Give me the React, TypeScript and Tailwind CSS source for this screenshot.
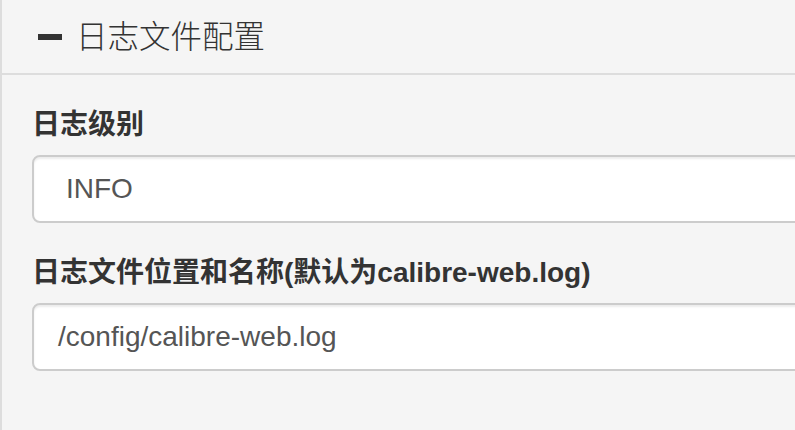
export default function App() {
  return (
    <div
      className="w-[795px] h-[430px] overflow-hidden bg-[#f5f5f5] text-[#333]"
      style={{ fontFamily: '"Liberation Sans", Arial, "Noto Sans CJK SC", sans-serif' }}
    >
      <div className="w-[1400px] h-full border-l-2 border-[#ddd] bg-[#f5f5f5]">
        {/* Panel heading */}
        <div className="h-[75px] border-b-2 border-[#ddd] px-[30px] flex items-center">
          <span className="ml-[6px] mr-[14px] block w-[24px] h-[6px] bg-[#333]" />
          <h3 className="text-[31.5px] leading-[35px] font-light text-[#333] mt-[1px]">日志文件配置</h3>
        </div>

        {/* Panel body */}
        <div className="p-[30px]">
          <div className="mb-[30px]">
            <label className="block mb-[10px] text-[28px] leading-[40px] font-bold">日志级别</label>
            <div className="h-[68px] w-[1300px] bg-white border-2 border-[#ccc] rounded-[8px] shadow-[inset_0_2px_2px_rgba(0,0,0,0.075)] pl-[32px] flex items-center text-[28px] text-[#555]">
              INFO
            </div>
          </div>
          <div>
            <label className="block mb-[10px] text-[28px] leading-[40px] font-bold">
              日志文件位置和名称(默认为calibre-web.log)
            </label>
            <div className="h-[68px] w-[1300px] bg-white border-2 border-[#ccc] rounded-[8px] shadow-[inset_0_2px_2px_rgba(0,0,0,0.075)] pl-[24px] flex items-center text-[28px] text-[#555]">
              /config/calibre-web.log
            </div>
          </div>
        </div>
      </div>
    </div>
  )
}
